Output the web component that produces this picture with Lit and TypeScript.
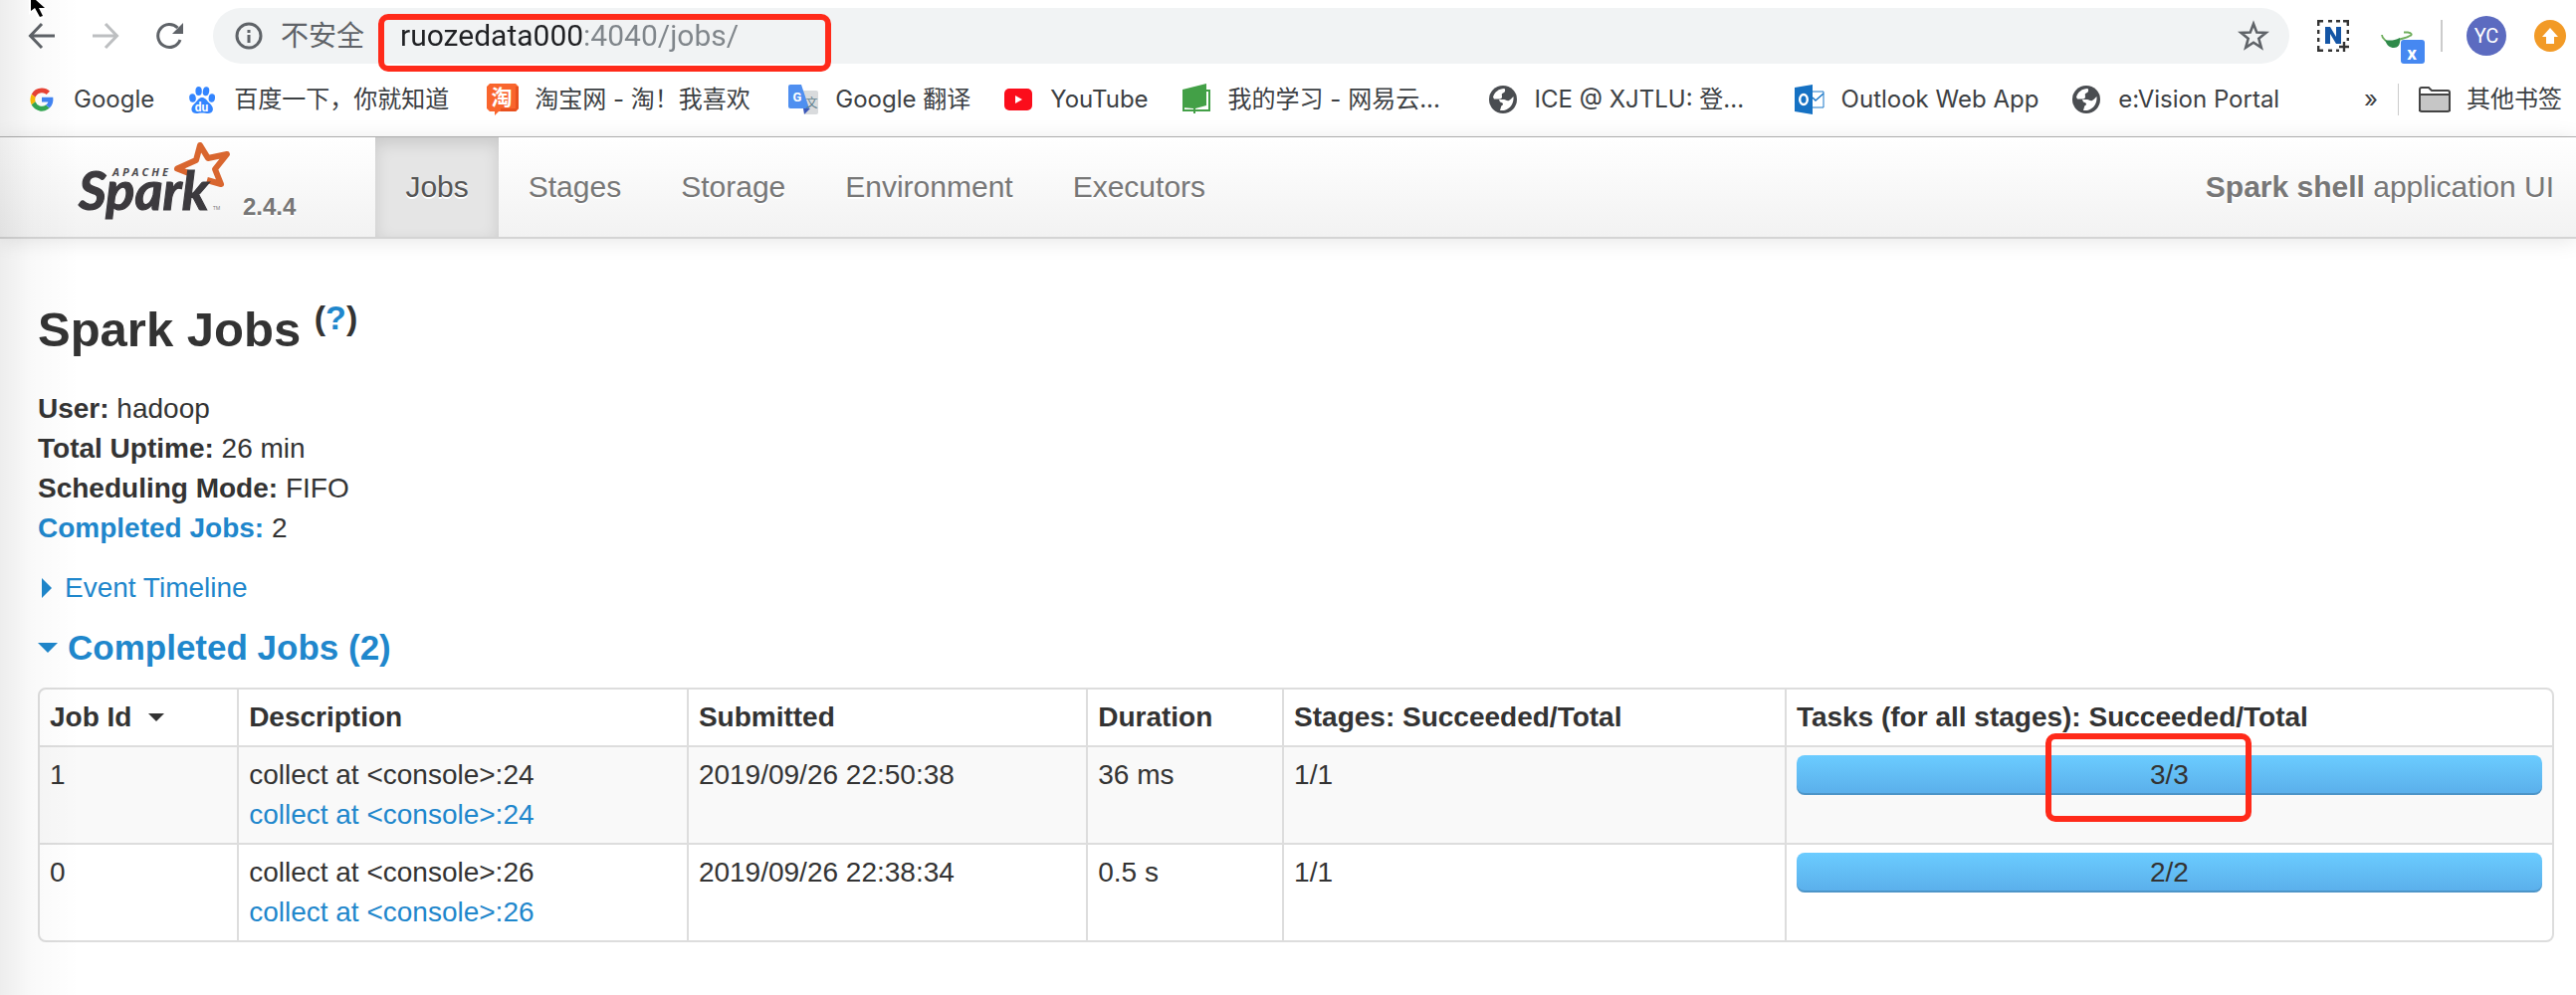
import { LitElement, html, css, svg } from "lit";
import { customElement } from "lit/decorators.js";

const globe = svg`
  <circle cx="16" cy="16" r="14" fill="#4a4d51"/>
  <path d="M17 5c-5 0-9.500 3.500-11 8.500l1 2h5.500c2 0 2.500-1 2.500-2.500 0-1.500-1-2.500 1-3.500 1.500-.5 2.500-1.500 2-4z" fill="#fff"/>
  <path d="M26.500 13c.6 6.500-3 12.500-9.500 14h-4l1-3.500c0-1.500 2-1.500 2-3 0-1.500-2-1.500-3-2l-1-2.500h5c2 0 3 2 5 1 1.500-1 2.500-2 4.500-4z" fill="#fff"/>`;

const icons = {
  google: svg`
    <path d="M16 4.500a11.500 11.500 0 0 1 8 3.200l-3.400 3.400A6.800 6.800 0 0 0 9.600 13.700L5.700 10.800A11.500 11.500 0 0 1 16 4.500z" fill="#ea4335"/>
    <path d="M5.700 10.800a11.700 11.700 0 0 0 0 10.400l3.900-3a7 7 0 0 1 0-4.500z" fill="#fbbc05"/>
    <path d="M5.700 21.200A11.500 11.500 0 0 0 23.800 24.600L20 21.600A6.900 6.900 0 0 1 9.600 18.200z" fill="#34a853"/>
    <path d="M16 13.800v4.600h6.400A5.600 5.600 0 0 1 20 21.600l3.800 3c2.700-2.500 4.100-6.300 3.500-10.800z" fill="#4285f4"/>`,
  baidu: svg`
    <g fill="#3385ff">
      <ellipse cx="6.500" cy="14.500" rx="3.300" ry="4.300" transform="rotate(-8 6.500 14.500)"/>
      <ellipse cx="12.600" cy="7.500" rx="3.200" ry="4.500"/>
      <ellipse cx="20" cy="7.700" rx="3.200" ry="4.500" transform="rotate(10 20 7.700)"/>
      <ellipse cx="25.800" cy="14.500" rx="3.200" ry="4.200" transform="rotate(8 25.800 14.500)"/>
      <path d="M16 14c3 0 4.500 2.500 6.500 4.800 3 3 5 5.200 4.300 8-.8 3.500-4.500 3.400-7.300 2.900-2.400-.4-4.600-.4-7 0-2.800.5-6.300.3-7-3-.6-3 1.200-4.800 4-7.700C11.800 16.500 13 14 16 14z"/>
    </g>
    <text x="15.500" y="27.500" text-anchor="middle" font-family="Roboto, sans-serif" font-weight="700" font-size="12" fill="#fff">du</text>`,
  taobao: svg`
    <path d="M3 0h26l3 3v22l-3 3H12l-4 4v-4H3l-3-3V3z" fill="#f9652d"/>
    <path d="M29 3l3 0v22l-3 3H14v-3h15z" fill="#e8511f"/>
    <text x="15" y="21" text-anchor="middle" font-family="'Noto Sans CJK SC', sans-serif" font-weight="700" font-size="21" fill="#fff">淘</text>`,
  translate: svg`
    <path d="M14 7h15a2 2 0 0 1 2 2v20a2 2 0 0 1-2 2H18z" fill="#d9dbdd"/>
    <path d="M16 25h7l-6 6z" fill="#3a57b8"/>
    <path d="M3 1h11l8 24H3a2 2 0 0 1-2-2V3a2 2 0 0 1 2-2z" fill="#4f8ff0"/>
    <text x="10" y="17.500" text-anchor="middle" font-family="Roboto, sans-serif" font-weight="700" font-size="13" fill="#fff">G</text>
    <text x="24.500" y="24" text-anchor="middle" font-family="'Noto Sans CJK SC', sans-serif" font-size="12" fill="#5d7d8c">文</text>`,
  youtube: svg`<rect x="2" y="5" width="28" height="22" rx="5" fill="#fb0d1b"/><path d="M13 12l7 4-7 4z" fill="#fff"/>`,
  study: svg`
    <path d="M26 7h3v20H3v-4" fill="none" stroke="#43a047" stroke-width="2"/>
    <path d="M2 6L26 0v22l-11 3v5h-2v-5L2 24z" fill="#43a047"/>`,
  globe,
  outlook: svg`
    <path d="M18 8h12v16H18z" fill="#fff" stroke="#1976c8" stroke-width="1"/>
    <path d="M19 14l3 3 8-7" fill="none" stroke="#1976c8" stroke-width="1.500"/>
    <path d="M1 4l18-3v30L1 28z" fill="#1571c3"/>
    <ellipse cx="10" cy="16" rx="3.800" ry="5" fill="none" stroke="#fff" stroke-width="2.400"/>`,
};

type IconName = keyof typeof icons;

const bookmarks: { icon: IconName; label: string; size?: string }[] = [
  { icon: "google", label: "Google" },
  { icon: "baidu", label: "百度一下，你就知道", size: "wide" },
  { icon: "taobao", label: "淘宝网 - 淘！我喜欢", size: "wide" },
  { icon: "translate", label: "Google 翻译" },
  { icon: "youtube", label: "YouTube" },
  { icon: "study", label: "我的学习 - 网易云...", size: "clipped" },
  { icon: "globe", label: "ICE @ XJTLU: 登...", size: "clipped" },
  { icon: "outlook", label: "Outlook Web App" },
  { icon: "globe", label: "e:Vision Portal" },
];

@customElement("browser-chrome")
export class BrowserChrome extends LitElement {
  static styles = css`
    :host {
      display: block;
      background: #fff;
      border-bottom: 1px solid #b3b3b3;
      font-family: Inter, "Noto Sans CJK SC", sans-serif;
      color: #3c4043;
    }
    svg { display: block; flex: none; overflow: visible; }
    button {
      display: block;
      padding: 0;
      border: 0;
      background: none;
      font: inherit;
      color: inherit;
      cursor: pointer;
    }
    .toolbar { display: flex; align-items: center; height: 72px; padding: 0 10px 0 26px; }
    .nav { display: flex; gap: 32px; margin-right: 28px; }
    .omnibox {
      flex: 1;
      display: flex;
      align-items: center;
      height: 56px;
      padding: 0 20px;
      border-radius: 28px;
      background: #f1f3f4;
    }
    .security { display: flex; align-items: center; gap: 16px; font-size: 28px; color: #5f6368; }
    .address { position: relative; flex: 1; margin: 0 16px 0 36px; }
    .url {
      display: block;
      box-sizing: border-box;
      width: 100%;
      height: 40px;
      padding: 0;
      border: 0;
      outline: 0;
      font: 30px/40px Roboto, sans-serif;
      color: transparent;
      background: linear-gradient(90deg, #202124 184px, #80868b 184px);
      -webkit-background-clip: text;
      background-clip: text;
    }
    .mark {
      position: absolute;
      left: -22px;
      top: -2px;
      box-sizing: border-box;
      width: 455px;
      height: 58px;
      border: 6px solid #ff2a1a;
      border-radius: 10px;
      pointer-events: none;
    }
    .tools { display: flex; align-items: center; margin-left: 28px; }
    .translate { margin-left: 32px; }
    .rule { width: 2px; height: 32px; margin: 0 24px 0 16px; background: #ccc; }
    .avatar {
      width: 40px;
      height: 40px;
      margin-right: 28px;
      border-radius: 50%;
      background: #5c6bc0;
      color: #fff;
      font: 20px/40px Roboto, sans-serif;
      text-align: center;
    }
    .bookmarks {
      display: flex;
      align-items: center;
      height: 56px;
      padding: 0 14px 9px 26px;
      font-size: 24px;
      white-space: nowrap;
    }
    .list { flex: 1; display: flex; gap: 32px; }
    .item { display: flex; align-items: center; gap: 16px; color: inherit; text-decoration: none; }
    .wide { min-width: 270px; }
    .clipped { min-width: 276px; }
    .more { margin-right: 20px; }
    .line { width: 1px; height: 32px; margin-right: 20px; background: #ccc; }
  `;

  render() {
    return html`
      <div class="toolbar">
        <div class="nav">
          <button aria-label="Back">
            <svg width="32" height="32" viewBox="0 0 32 32" fill="none" stroke="#5f6368" stroke-width="3"><path d="M29 16H5M16 4L4.500 16 16 28"/></svg>
          </button>
          <button aria-label="Forward">
            <svg width="32" height="32" viewBox="0 0 32 32" fill="none" stroke="#bdbfc1" stroke-width="3"><path d="M3 16h24M16 4l11.500 12L16 28"/></svg>
          </button>
          <button aria-label="Reload">
            <svg width="32" height="32" viewBox="0 0 32 32"><path d="M27 20a11.500 11.500 0 1 1-2.500-12" fill="none" stroke="#5f6368" stroke-width="3"/><path d="M30 3v11H19z" fill="#5f6368"/></svg>
          </button>
        </div>
        <div class="omnibox">
          <div class="security">
            <svg width="32" height="32" viewBox="0 0 32 32"><circle cx="16" cy="16" r="12" fill="none" stroke="#5f6368" stroke-width="3"/><path d="M14.500 15h3v8h-3zM14.500 10h3v3h-3z" fill="#5f6368"/></svg>
            <span>不安全</span>
          </div>
          <div class="address">
            <input class="url" type="text" aria-label="Address" value="ruozedata000:4040/jobs/" spellcheck="false">
            <div class="mark"></div>
          </div>
          <button aria-label="Bookmark this page">
            <svg width="32" height="32" viewBox="0 0 32 32"><path d="M16 4l3.300 8.600 9.200.4-7.200 5.800 2.500 9L16 22.700l-7.800 5.100 2.500-9L3.500 13l9.200-.4z" fill="none" stroke="#5f6368" stroke-width="2.600"/></svg>
          </button>
        </div>
        <div class="tools">
          <button aria-label="Screenshot">
            <svg width="32" height="32" viewBox="0 0 32 32">
              <path d="M1.200 6V1.200H6M11 1.200h4M19 1.200h4M26 1.200h4.800V6M30.800 10v4M30.800 18v3M1.200 10v4M1.200 18v4M1.200 26v4.800H6M11 30.800h4M19 30.800h3M27 22v10M22 27h10" fill="none" stroke="#333" stroke-width="2.400"/>
              <path d="M8 24V7h5l6 10V7h5v17h-5l-6-10v10z" fill="#1455a5"/>
            </svg>
          </button>
          <button class="translate" aria-label="Translate">
            <svg width="44" height="56" viewBox="0 0 44 56">
              <path d="M1 27c0 3 2 4 4 6M18 32c3-2 7-1 11-4 3-1 2-3-2-3.500h-4" fill="none" stroke="#6fae5c" stroke-width="1.800"/>
              <path d="M4 32c5 1 9 1 15-2 1 7-2 10-6 10s-7-2-9-8z" fill="#2f8a4a"/>
              <rect x="20" y="32" width="24" height="24" rx="3" fill="#4688f1"/>
              <text x="31" y="52" text-anchor="middle" font-family="Roboto, sans-serif" font-weight="700" font-size="19" fill="#fff">x</text>
            </svg>
          </button>
          <div class="rule"></div>
          <button class="avatar">YC</button>
          <button aria-label="Update">
            <svg width="32" height="32" viewBox="0 0 32 32"><circle cx="16" cy="16" r="16" fill="#f29a26"/><path d="M16 8l8 9h-4v7h-8v-7H8z" fill="#fff"/></svg>
          </button>
        </div>
      </div>
      <div class="bookmarks">
        <div class="list">
          ${bookmarks.map(
            (b) => html`<a class="item ${b.size ?? ""}" href="#">
              <svg width="32" height="32" viewBox="0 0 32 32">${icons[b.icon]}</svg><span>${b.label}</span>
            </a>`,
          )}
        </div>
        <button class="more" aria-label="More bookmarks">»</button>
        <div class="line"></div>
        <a class="item" href="#">
          <svg width="32" height="32" viewBox="0 0 32 32"><path d="M1 27V6a2 2 0 0 1 2-2h7l3 3h16a2 2 0 0 1 2 2v18z" fill="#fff" stroke="#444" stroke-width="2"/><path d="M1 11h30v15a2 2 0 0 1-2 2H3a2 2 0 0 1-2-2z" fill="#c6c6c6" stroke="#444" stroke-width="2"/></svg>
          <span>其他书签</span>
        </a>
      </div>
    `;
  }
}

@customElement("spark-navbar")
export class SparkNavbar extends LitElement {
  static styles = css`
    :host {
      display: flex;
      height: 100px;
      padding-right: 22px;
      background: linear-gradient(#fff, #f2f2f2);
      border-bottom: 2px solid #d4d4d4;
      box-shadow: 0 2px 20px rgba(0, 0, 0, 0.1);
      font-size: 30px;
      line-height: 40px;
      color: #777;
      text-shadow: 0 2px 0 #fff;
    }
    a { color: inherit; text-decoration: none; }
    .brand { display: flex; align-items: flex-end; gap: 10px; padding: 0 80px 18px 78px; }
    .brand svg { display: block; overflow: visible; text-shadow: none; }
    .version { font-size: 24px; line-height: 24px; font-weight: 700; }
    .tabs { flex: 1; display: flex; }
    .tab { padding: 30px; }
    .active { color: #555; background: #e5e5e5; box-shadow: inset 0 6px 16px rgba(0, 0, 0, 0.125); }
    .app { padding: 30px 0; }
  `;

  render() {
    return html`
      <div class="brand">
        <a href="#" aria-label="Apache Spark">
          <svg width="156" height="80" viewBox="78 140 156 80">
            <path d="M192 175L178 169.500 197 161 201 146 209 159 228 155 216 170 222 185 208 181" fill="none" stroke="#d9662f" stroke-width="6" stroke-linejoin="round"/>
            <text x="79" y="211" font-family="Lato, sans-serif" font-weight="700" font-style="italic" font-size="54" fill="#3c3a3e" stroke="#3c3a3e" stroke-width="1.200">Spark</text>
            <text x="113" y="177" font-family="'Open Sans', sans-serif" font-weight="700" font-style="italic" font-size="11" letter-spacing="3" fill="#4a484c">APACHE</text>
            <text x="214" y="211" font-family="'Open Sans', sans-serif" font-size="5" fill="#777">TM</text>
          </svg>
        </a>
        <span class="version">2.4.4</span>
      </div>
      <nav class="tabs">
        <a class="tab active" href="#">Jobs</a>
        <a class="tab" href="#">Stages</a>
        <a class="tab" href="#">Storage</a>
        <a class="tab" href="#">Environment</a>
        <a class="tab" href="#">Executors</a>
      </nav>
      <div class="app"><strong>Spark shell</strong> application UI</div>
    `;
  }
}

interface Job {
  id: number;
  description: string;
  submitted: string;
  duration: string;
  stages: string;
  done: number;
  total: number;
  marked?: boolean;
}

const jobs: Job[] = [
  { id: 1, description: "collect at <console>:24", submitted: "2019/09/26 22:50:38", duration: "36 ms", stages: "1/1", done: 3, total: 3, marked: true },
  { id: 0, description: "collect at <console>:26", submitted: "2019/09/26 22:38:34", duration: "0.5 s", stages: "1/1", done: 2, total: 2 },
];

@customElement("jobs-table")
export class JobsTable extends LitElement {
  static styles = css`
    :host { display: block; }
    table {
      width: 100%;
      table-layout: fixed;
      border: 2px solid #ddd;
      border-radius: 8px;
      border-collapse: separate;
      border-spacing: 0;
    }
    th, td { box-sizing: border-box; padding: 8px 10px; text-align: left; vertical-align: top; }
    th + th, td + td { border-left: 2px solid #ddd; }
    td { border-top: 2px solid #ddd; }
    tbody tr:nth-child(odd) td { background: #f9f9f9; }
    a { color: #1f87cc; text-decoration: none; }
    .id { width: 7.85%; }
    .description { width: 17.9%; }
    .submitted { width: 15.9%; }
    .duration { width: 7.8%; }
    .stages { width: 20%; }
    .sorted { display: flex; align-items: center; gap: 17px; }
    .caret { border: 8px solid transparent; border-top-color: #333; border-bottom: 0; }
    .bar {
      position: relative;
      height: 40px;
      border-radius: 8px;
      background: #f7f7f7;
      text-align: center;
    }
    .fill {
      height: 40px;
      border-radius: 8px;
      background: linear-gradient(#6bccff, #5aaeea);
      box-shadow: inset 0 -2px 0 rgba(0, 0, 0, 0.15);
    }
    .count { position: absolute; inset: 0; }
    .mark {
      position: absolute;
      left: calc(50% - 124px);
      top: -22px;
      box-sizing: border-box;
      width: 207px;
      height: 89px;
      border: 6px solid #ff2a1a;
      border-radius: 10px;
      pointer-events: none;
    }
  `;

  render() {
    return html`
      <table>
        <thead>
          <tr>
            <th class="id"><div class="sorted">Job Id<span class="caret"></span></div></th>
            <th class="description">Description</th>
            <th class="submitted">Submitted</th>
            <th class="duration">Duration</th>
            <th class="stages">Stages: Succeeded/Total</th>
            <th>Tasks (for all stages): Succeeded/Total</th>
          </tr>
        </thead>
        <tbody>
          ${jobs.map(
            (job) => html`<tr>
              <td>${job.id}</td>
              <td><div>${job.description}</div><a href="#">${job.description}</a></td>
              <td>${job.submitted}</td>
              <td>${job.duration}</td>
              <td>${job.stages}</td>
              <td>
                <div class="bar">
                  <div class="fill" style="width: ${(100 * job.done) / job.total}%"></div>
                  <span class="count">${job.done}/${job.total}</span>
                  ${job.marked ? html`<div class="mark"></div>` : null}
                </div>
              </td>
            </tr>`,
          )}
        </tbody>
      </table>
    `;
  }
}

@customElement("app-root")
export class AppRoot extends LitElement {
  static styles = css`
    :host {
      display: block;
      position: relative;
      min-height: 100vh;
      overflow: hidden;
      background: #fff;
      color: #333;
      font: 28px/40px "Liberation Sans", sans-serif;
    }
    main { padding: 51px 22px 53px 38px; }
    h1 { margin: 0 0 20px; font-size: 49px; line-height: 80px; }
    sup { font-size: 34px; line-height: 0; }
    a, button { color: #1f87cc; text-decoration: none; }
    ul { margin: 0; padding: 0; list-style: none; }
    button {
      display: flex;
      align-items: center;
      padding: 0;
      border: 0;
      background: none;
      font: inherit;
      cursor: pointer;
    }
    .timeline { gap: 13px; margin: 20px 0; padding-left: 4px; }
    .completed { gap: 10px; margin: 0 0 20px; font-size: 35px; font-weight: 700; }
    .right { border: 10px solid transparent; border-left-color: currentColor; border-right: 0; }
    .down { border: 10px solid transparent; border-top-color: currentColor; border-bottom: 0; }
    .edge {
      position: absolute;
      inset: 0 auto 0 0;
      width: 80px;
      background: linear-gradient(90deg, rgba(0, 0, 0, 0.07), rgba(0, 0, 0, 0.025) 40%, transparent);
      pointer-events: none;
    }
    .cursor { position: absolute; left: 28px; top: 0; pointer-events: none; }
  `;

  render() {
    return html`
      <browser-chrome></browser-chrome>
      <spark-navbar></spark-navbar>
      <main>
        <h1>Spark Jobs <sup>(<a href="#">?</a>)</sup></h1>
        <ul>
          <li><strong>User:</strong> hadoop</li>
          <li><strong>Total Uptime:</strong> 26 min</li>
          <li><strong>Scheduling Mode:</strong> FIFO</li>
          <li><a href="#"><strong>Completed Jobs:</strong></a> 2</li>
        </ul>
        <button class="timeline"><span class="right"></span>Event Timeline</button>
        <button class="completed"><span class="down"></span>Completed Jobs (2)</button>
        <jobs-table></jobs-table>
      </main>
      <div class="edge"></div>
      <svg class="cursor" width="24" height="22" viewBox="0 0 24 22">
        <path d="M1 0v15l5-4 4 9 7-2-4-8h7L10 0z" fill="#fff"/>
        <path d="M3 0v11l4-3 5 9 3-1-4-8h6L8 0z" fill="#000"/>
      </svg>
    `;
  }
}
